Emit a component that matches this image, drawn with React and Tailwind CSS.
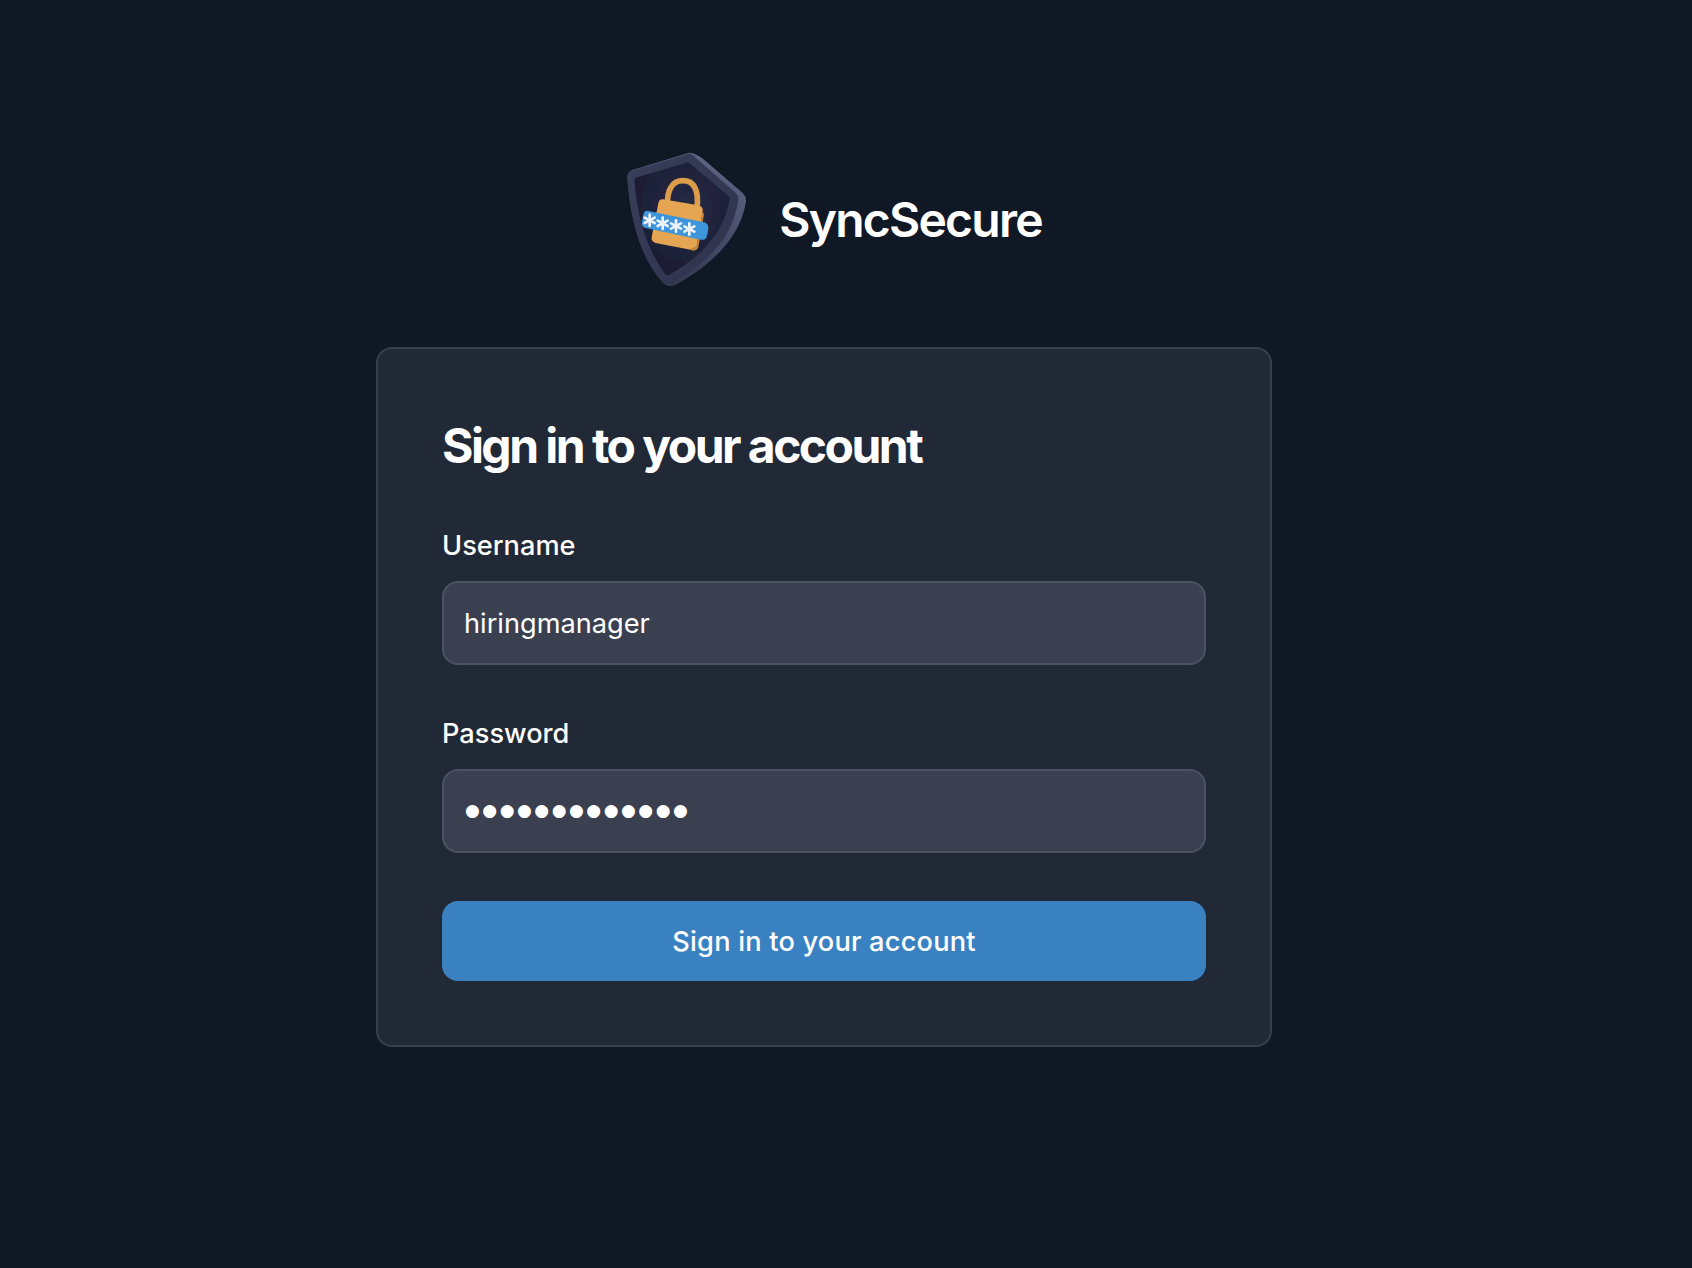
const Star = ({ x, y }) => (
  <g transform={`translate(${x} ${y})`} stroke="#eef3f8" strokeWidth="8" strokeLinecap="round">
    <path d="M0-17V17" />
    <path d="M-15-8 15 8" />
    <path d="M-15 8 15-8" />
  </g>
);

function Logo() {
  return (
    <svg viewBox="0 0 450 480" className="w-[150px] h-[160px] shrink-0">
      <defs>
        <linearGradient id="rim" x1="0" y1="0" x2="1" y2="1">
          <stop offset="0" stopColor="#383d59" />
          <stop offset="0.6" stopColor="#343853" />
          <stop offset="1" stopColor="#2c3047" />
        </linearGradient>
        <linearGradient id="side" x1="0.8" y1="0.1" x2="0.4" y2="1">
          <stop offset="0" stopColor="#5d6282" />
          <stop offset="0.45" stopColor="#484d6a" />
          <stop offset="1" stopColor="#33374f" />
        </linearGradient>
        <radialGradient id="inner" cx="0.55" cy="0.4" r="0.6">
          <stop offset="0" stopColor="#272a48" />
          <stop offset="1" stopColor="#1a1d32" />
        </radialGradient>
        <filter id="soft" x="-5%" y="-5%" width="110%" height="110%">
          <feGaussianBlur stdDeviation="2" />
        </filter>
      </defs>
      <g filter="url(#soft)">
        <path d="M240 38Q262 40 280 55L402 160Q414 172 410 190Q385 330 205 432Q180 446 162 428Q70 330 55 112Q55 96 70 90L240 38Z" fill="url(#side)" />
        <path d="M235 42 66 94Q55 98 55 112Q68 320 162 428Q172 436 185 430Q366 335 388 180Q390 168 380 158L258 52Q248 38 235 42Z" fill="url(#rim)" />
        <path d="M232 68 80 113Q76 115 76 120Q90 300 170 404Q175 408 180 405Q340 315 362 178Q362 172 358 168L240 68Q236 66 232 68Z" fill="url(#inner)" />
        <path d="M176 200C172 150 190 122 222 122C255 122 270 150 264 205" fill="none" stroke="#dc9d4c" strokeWidth="17" />
        <path d="M162 178 268 196Q284 200 281 216L263 318Q260 332 245 329L140 309Q126 305 128 292L148 190Q151 176 162 178Z" fill="#e5a552" />
        <path d="M248 331 245 326 263 318 281 216 285 222 268 322Q262 335 248 331Z" fill="#c9863a" />
        <path d="M118 213 285 247Q300 252 298 266L294 287Q290 302 275 299L110 264Q96 260 99 245L103 224Q106 210 118 213Z" fill="#3d95dc" />
        <Star x={122} y={241} />
        <Star x={161} y={250} />
        <Star x={201} y={258} />
        <Star x={241} y={267} />
      </g>
    </svg>
  );
}

function Field({ label, value, dots }) {
  return (
    <label className="block">
      <span className="block text-[27.2px] leading-[42px] font-medium text-white">{label}</span>
      <input
        type="text"
        value={value}
        readOnly
        className={
          dots
            ? "mt-[14px] block w-full h-[84px] pl-[21px] pr-[20px] pb-[2px] rounded-2xl bg-[#3a4050] border-2 border-[#4b5263] text-[17px] tracking-[2.5px] font-['DejaVu_Sans',sans-serif] text-white outline-none"
            : "mt-[14px] block w-full h-[84px] px-[20px] rounded-2xl bg-[#3a4050] border-2 border-[#4b5263] text-[27.2px] text-white outline-none"
        }
      />
    </label>
  );
}

export default function App() {
  return (
    <div className="min-h-[1268px] bg-[#111825] flex flex-col items-center pt-[150px] pr-[44px] font-['Inter',sans-serif]">
      <div className="flex items-center gap-5 h-[140px] ml-[3px]">
        <Logo />
        <span className="text-5xl font-semibold tracking-[-1.75px] text-white">SyncSecure</span>
      </div>
      <form className="mt-[57px] w-[896px] h-[700px] rounded-2xl bg-[#212836] border-2 border-[#373e4c] p-16 flex flex-col">
        <h1 className="text-5xl leading-[66px] font-bold tracking-[-2.54px] text-white">Sign in to your account</h1>
        <div className="mt-[46px]">
          <Field label="Username" value="hiringmanager" />
        </div>
        <div className="mt-[48px]">
          <Field label="Password" value="●●●●●●●●●●●●●" dots />
        </div>
        <button type="button" className="mt-[48px] h-20 pt-[2px] rounded-2xl bg-[#3a81c2] text-[27.2px] tracking-[0.2px] font-medium text-white">
          Sign in to your account
        </button>
      </form>
    </div>
  );
}
